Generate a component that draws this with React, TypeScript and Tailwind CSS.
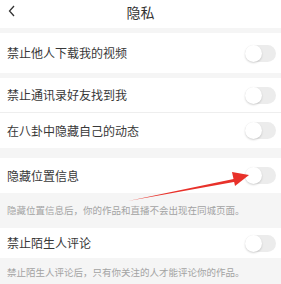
import React from "react";

const font = { fontFamily: '"Noto Sans CJK SC", "Noto Sans", sans-serif' };

const Toggle = () => (
  <div className="relative h-[17px] w-[31px] rounded-full bg-[#ececec]">
    <div className="absolute left-0 top-0 size-[17px] rounded-full bg-white shadow-[0_1px_2px_rgba(0,0,0,0.18)]" />
  </div>
);

const Row = ({ label, className = "" }: { label: string; className?: string }) => (
  <div className={`flex items-center justify-between bg-white pl-[7px] pr-[5px] ${className}`}>
    <span className="text-[12px] leading-none text-[#383838]">{label}</span>
    <Toggle />
  </div>
);

const Note = ({ text, className = "" }: { text: string; className?: string }) => (
  <div className={`flex items-center bg-[#f5f5f5] pl-[7px] ${className}`}>
    <span className="text-[9.5px] leading-none text-[#a3a3a3]">{text}</span>
  </div>
);

export default function App() {
  return (
    <div className="relative h-[284px] w-[281px] overflow-hidden bg-[#f5f5f5]" style={font}>
      <div className="relative flex h-[28px] items-center justify-center bg-white pb-[4px]">
        <svg className="absolute left-[8px] top-[5px]" width="8" height="12" viewBox="0 0 8 12">
          <path d="M6 1 L1.5 6 L6 11" fill="none" stroke="#333" strokeWidth="1.3" />
        </svg>
        <span className="text-[14px] leading-none text-[#333]">隐私</span>
      </div>
      <div className="h-[5px]" />
      <Row label="禁止他人下载我的视频" className="h-[40px]" />
      <div className="h-[5px]" />
      <Row label="禁止通讯录好友找到我" className="h-[35px] border-b border-[#eeeeee]" />
      <Row label="在八卦中隐藏自己的动态" className="h-[35px]" />
      <div className="h-[10px]" />
      <Row label="隐藏位置信息" className="h-[35px]" />
      <Note text="隐藏位置信息后，你的作品和直播不会出现在同城页面。" className="h-[35px]" />
      <Row label="禁止陌生人评论" className="h-[30px]" />
      <Note text="禁止陌生人评论后，只有你关注的人才能评论你的作品。" className="h-[30px]" />
      <svg className="absolute left-0 top-0" width="281" height="284" viewBox="0 0 281 284">
        <polygon points="128,201 236,178.5 236.6,181.5" fill="#e8312a" />
        <polygon points="249,175 232,172 235,186" fill="#e8312a" />
      </svg>
    </div>
  );
}
